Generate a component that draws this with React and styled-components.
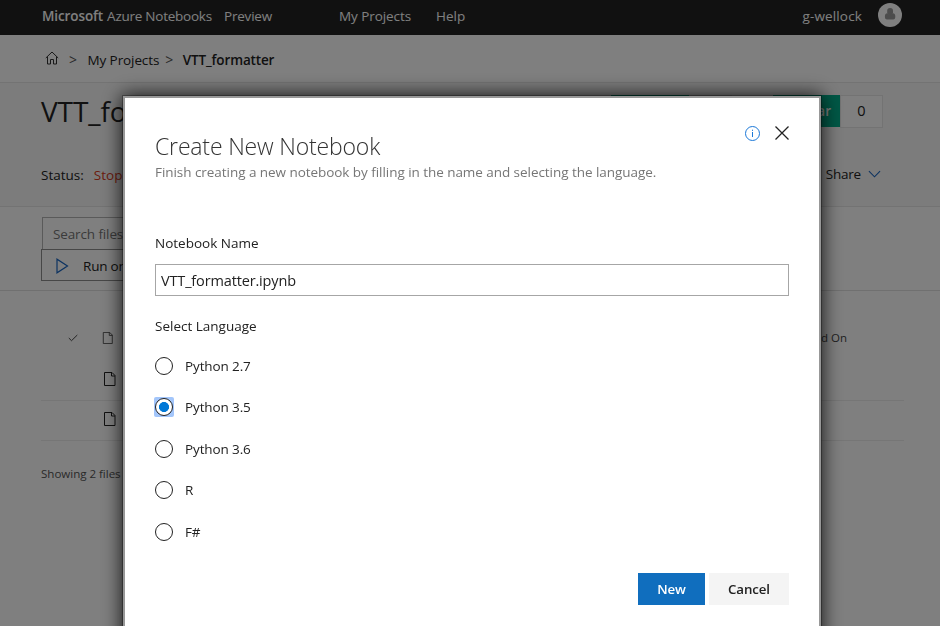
import React, { useState } from 'react';
import styled, { createGlobalStyle } from 'styled-components';

const GlobalStyle = createGlobalStyle`
  *, *::before { box-sizing: border-box; }
  html, body { margin: 0; height: 100%; overflow: hidden; }
  body {
    background: #fff;
    color: #222;
    font: 400 13.5px/20px "Open Sans", "Noto Sans", sans-serif;
  }
  #root { height: 626px; }
`;

const Page = styled.div`
  width: 940px;
  height: 626px;
  overflow: hidden;
`;

const Text = styled.span`
  white-space: nowrap;
  letter-spacing: ${(p) => p.$ls || 0}px;
  font-weight: ${(p) => p.$weight || 'inherit'};
`;

const NavBar = styled.header`
  height: 35px;
  padding: 0 37px 3px 42px;
  display: flex;
  align-items: center;
  background: #222;
  color: #fff;
`;

const Brand = styled.div`
  display: flex;
  gap: 4px;
  width: 182px;
`;

const NavLinks = styled.nav`
  flex: 1;
  display: flex;
  padding-left: 67px;
  gap: 25px;
`;

const User = styled.div`
  display: flex;
  align-items: center;
  gap: 15px;
`;

const Avatar = styled.svg`
  display: block;
  width: 26px;
  height: 26px;
  margin-top: -2px;
`;

const Breadcrumb = styled.div`
  height: 48px;
  padding: 3px 0 0 45px;
  display: flex;
  align-items: center;
  border-bottom: 1px solid #e6e6e6;
`;

const Separator = styled.span`
  color: #555;
  width: ${(p) => p.$width}px;
  padding-left: ${(p) => p.$pad}px;
  font-size: 14px;
`;

const HomeIcon = styled.svg`
  width: 14px;
  height: 14px;
  margin-bottom: 5px;
`;

const ProjectHeader = styled.section`
  height: 124px;
  padding: 12px 57px 0 41px;
  background: #f8f8f8;
  border-bottom: 1px solid #e6e6e6;
`;

const TitleRow = styled.div`
  display: flex;
  justify-content: space-between;
  align-items: flex-start;
  height: 65px;
`;

const ProjectTitle = styled.h1`
  margin: -1px 0 0;
  font-size: 28px;
  line-height: 34px;
  font-weight: 400;
  letter-spacing: -0.1px;
`;

const Counters = styled.div`
  display: flex;
  gap: 41px;
`;

const Counter = styled.div`
  display: flex;
  height: 33px;
`;

const CounterLabel = styled.div`
  width: ${(p) => p.$width}px;
  height: 32px;
  display: flex;
  align-items: center;
  justify-content: flex-end;
  padding-right: 9px;
  background: #00b08c;
  color: #fff;
  font-weight: 600;
`;

const CounterValue = styled.div`
  width: 43px;
  padding-bottom: 1px;
  display: flex;
  align-items: center;
  justify-content: center;
  font-size: 14.5px;
  background: #fff;
  border: 1px solid #e6e6e6;
`;

const StatusRow = styled.div`
  display: flex;
  align-items: center;
  justify-content: space-between;
  height: 28px;
`;

const Status = styled.div`
  display: flex;
  gap: 10px;
  padding-top: 2px;
`;

const Stopped = styled(Text)`
  color: #d83b20;
`;

const Share = styled.div`
  display: flex;
  align-items: center;
  gap: 7px;
  padding-right: 2px;
`;

const Tools = styled.section`
  height: 84px;
  padding: 10px 0 0 41px;
  border-bottom: 1px solid #e0e0e0;
`;

const SearchBox = styled.div`
  width: 300px;
  height: 33px;
  margin-left: 1px;
  padding: 1px 0 0 10px;
  display: flex;
  align-items: center;
  border: 1px solid #b5b5b5;
  color: #767676;
`;

const RunButton = styled.div`
  width: 150px;
  height: 32px;
  margin-top: -1px;
  padding: 1px 0 0 14px;
  display: flex;
  align-items: center;
  gap: 14px;
  border: 1px solid #8f8f8f;
`;

const FileList = styled.section`
  margin: 25px 36px 0 41px;
`;

const FileHead = styled.div`
  height: 44px;
  padding: 0 57px 1px 27px;
  display: flex;
  align-items: center;
  font-size: 11.5px;
  color: #444;
`;

const HeadIcons = styled.div`
  flex: 1;
  display: flex;
  align-items: center;
  gap: 24px;
`;

const FileRow = styled.div`
  height: ${(p) => p.$height}px;
  padding: 0 0 3px 62px;
  display: flex;
  align-items: center;
  border-bottom: 1px solid #ececec;
`;

const Summary = styled.div`
  margin-top: 23px;
  font-size: 11.6px;
  letter-spacing: -0.04px;
  color: #555;
`;

const Overlay = styled.div`
  position: fixed;
  inset: 0;
  background: rgba(0, 0, 0, 0.5);
`;

const Dialog = styled.div`
  position: fixed;
  left: 123px;
  top: 96px;
  width: 698px;
  height: 560px;
  padding: 32px 30px 0;
  background: #fff;
  background-clip: padding-box;
  border: 2px solid #989898;
  box-shadow: 0 0 0 1px rgba(0, 0, 0, 0.3), 0 0 18px 1px rgba(0, 0, 0, 0.85);
`;

const DialogHead = styled.div`
  height: 55px;
  display: flex;
  justify-content: space-between;
`;

const DialogTitle = styled.h2`
  margin: 0;
  font-size: 23px;
  line-height: 32px;
  font-weight: 300;
  letter-spacing: -0.17px;
  color: #333;
`;

const Subtitle = styled.p`
  margin: 0;
  line-height: 20px;
  letter-spacing: -0.05px;
  white-space: nowrap;
  color: #767676;
`;

const DialogActions = styled.div`
  display: flex;
  align-items: flex-start;
  gap: 14px;
  svg { display: block; margin-top: -5px; }
`;

const Field = styled.label`
  display: block;
  margin-top: 48px;
`;

const NameInput = styled.input`
  display: block;
  width: 634px;
  height: 32px;
  margin-top: 11px;
  padding: 1px 5px 0;
  border: 1px solid #a6a6a6;
  border-radius: 0;
  outline: none;
  color: #222;
  font: 400 14.5px "Open Sans", sans-serif;
  letter-spacing: -0.15px;
`;

const Languages = styled.fieldset`
  margin: 20px 0 0;
  padding: 0;
  border: 0;
`;

const Options = styled.div`
  display: grid;
  grid-auto-rows: 41.5px;
  margin-top: 9px;
`;

const Option = styled.label`
  display: flex;
  align-items: center;
  gap: 11px;
  margin-left: -1px;
`;

const Radio = styled.input`
  appearance: none;
  width: 20px;
  height: 20px;
  margin: 0;
  display: grid;
  place-items: center;
  border-radius: 2px;
  background: ${(p) => (p.checked ? '#a3c6fb' : 'transparent')};

  &::before {
    content: '';
    width: 18px;
    height: 18px;
    border: 1px solid #222;
    border-radius: 50%;
    background: ${(p) =>
      p.checked ? 'radial-gradient(circle, #0078d7 4.7px, #fff 5.3px)' : '#fff'};
  }
`;

const Footer = styled.div`
  margin-top: 20px;
  display: flex;
  justify-content: flex-end;
  gap: 4px;
`;

const Button = styled.button`
  width: ${(p) => (p.$primary ? 67 : 80)}px;
  height: 32px;
  padding: 1px 0 0;
  border: 0;
  background: ${(p) => (p.$primary ? '#106ebe' : '#f4f4f4')};
  color: ${(p) => (p.$primary ? '#fff' : '#222')};
  font: 600 13.3px "Open Sans", sans-serif;
  letter-spacing: -0.1px;
`;

const FileIcon = ({ size = 14, color = '#222' }) => (
  <svg width={size} height={size} viewBox="0 0 14 14" fill="none" stroke={color}>
    <path d="M1.5 .5h7.500l3 3v10h-10.500zM8.500 .5v3.500h3.500" />
  </svg>
);

const languages = ['Python 2.7', 'Python 3.5', 'Python 3.6', 'R', 'F#'];

export default function App() {
  const [language, setLanguage] = useState('Python 3.5');
  const [name, setName] = useState('VTT_formatter.ipynb');

  return (
    <Page>
      <GlobalStyle />
      <NavBar>
        <Brand>
          <Text $weight={600} $ls={-0.1}>Microsoft</Text>
          <Text $ls={-0.25}>Azure Notebooks</Text>
        </Brand>
        <Text $ls={-0.2}>Preview</Text>
        <NavLinks>
          <Text $ls={-0.08}>My Projects</Text>
          <Text>Help</Text>
        </NavLinks>
        <User>
          <Text $ls={0.15}>g-wellock</Text>
          <Avatar viewBox="0 0 26 26">
            <circle cx="13" cy="13" r="12" fill="#fff" />
            <rect x="10.2" y="6" width="5.800" height="7" rx="2.800" fill="#999" />
            <path d="M10.400 11.200c-2 .1-2.500 1.300-2.500 3.400 0 2 .5 3 2.200 3h6c1.700 0 2.200-1 2.200-3 0-2.100-.5-3.300-2.500-3.400-1.400 1.800-4 1.800-5.400 0z" fill="#999" />
          </Avatar>
        </User>
      </NavBar>

      <Breadcrumb>
        <HomeIcon viewBox="0 0 14 14" fill="none" stroke="#333">
          <path d="M.8 7 7 1l6.200 6M2.500 5.600v7.400h3V8.500h3V13h3V5.600" />
        </HomeIcon>
        <Separator $width={28.5} $pad={10}>&gt;</Separator>
        <Text $ls={-0.1}>My Projects</Text>
        <Separator $width={23.5} $pad={6}>&gt;</Separator>
        <Text $weight={600} $ls={-0.14}>VTT_formatter</Text>
      </Breadcrumb>

      <ProjectHeader>
        <TitleRow>
          <ProjectTitle>VTT_formatter</ProjectTitle>
          <Counters>
            <Counter>
              <CounterLabel $width={78} />
              <CounterValue />
            </Counter>
            <Counter>
              <CounterLabel $width={67}>Star</CounterLabel>
              <CounterValue>0</CounterValue>
            </Counter>
          </Counters>
        </TitleRow>
        <StatusRow>
          <Status>
            <Text>Status:</Text>
            <Stopped>Stopped</Stopped>
          </Status>
          <Share>
            <Text $ls={-0.2}>Share</Text>
            <svg width="13" height="8" viewBox="0 0 14 8" fill="none" stroke="#1a66c2" strokeWidth="1.200">
              <path d="M1 1l6 6 6-6" />
            </svg>
          </Share>
        </StatusRow>
      </ProjectHeader>

      <Tools>
        <SearchBox><Text $ls={-0.12}>Search files</Text></SearchBox>
        <RunButton>
          <svg width="13" height="16" viewBox="0 0 13 16" fill="none" stroke="#1a66c2" strokeWidth="1.200">
            <path d="M1 1.200v13.600L11.500 8z" />
          </svg>
          <Text $ls={-0.2}>Run on</Text>
        </RunButton>
      </Tools>

      <FileList>
        <FileHead>
          <HeadIcons>
            <svg width="10" height="12" viewBox="0 0 10 12" fill="none" stroke="#444">
              <path d="M.8 6l2.700 2.700L9.300 3" />
            </svg>
            <FileIcon size={12} color="#444" />
          </HeadIcons>
          <Text>Modified On</Text>
        </FileHead>
        <FileRow $height={41}><FileIcon /></FileRow>
        <FileRow $height={40}><FileIcon /></FileRow>
        <Summary>Showing 2 files</Summary>
      </FileList>

      <Overlay />

      <Dialog role="dialog" aria-label="Create New Notebook">
        <DialogHead>
          <div>
            <DialogTitle>Create New Notebook</DialogTitle>
            <Subtitle>
              Finish creating a new notebook by filling in the name and selecting the language.
            </Subtitle>
          </div>
          <DialogActions>
            <svg width="16" height="16" viewBox="0 0 16 16" fill="none" stroke="#1b78d8">
              <circle cx="7.500" cy="8.500" r="7" />
              <path d="M7.500 7v5M7.500 4.700v1.200" />
            </svg>
            <svg width="14" height="16" viewBox="0 0 14 16" fill="none" stroke="#222" strokeWidth="1.300">
              <path d="M.5 1.500l13 13M13.500 1.500l-13 13" />
            </svg>
          </DialogActions>
        </DialogHead>

        <Field>
          <Text>Notebook Name</Text>
          <NameInput value={name} onChange={(e) => setName(e.target.value)} />
        </Field>

        <Languages>
          <Text>Select Language</Text>
          <Options>
            {languages.map((item) => (
              <Option key={item}>
                <Radio
                  type="radio"
                  name="language"
                  checked={language === item}
                  onChange={() => setLanguage(item)}
                />
                <Text $ls={-0.12}>{item}</Text>
              </Option>
            ))}
          </Options>
        </Languages>

        <Footer>
          <Button $primary>New</Button>
          <Button>Cancel</Button>
        </Footer>
      </Dialog>
    </Page>
  );
}
